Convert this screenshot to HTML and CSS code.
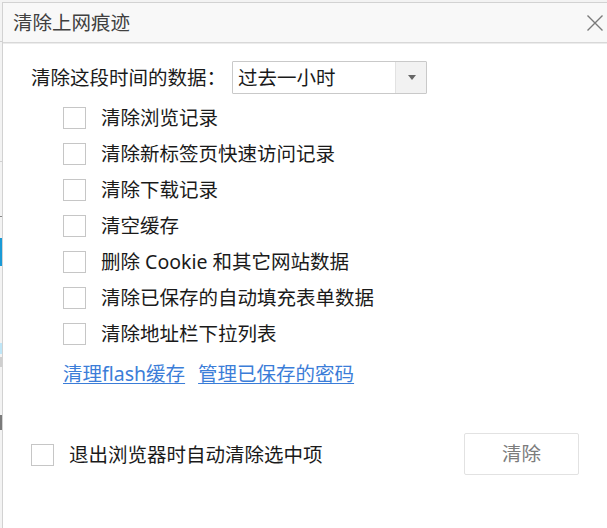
FILE: index.html
```html
<!DOCTYPE html>
<html lang="zh-CN">
<head>
<meta charset="utf-8">
<title>清除上网痕迹</title>
<link rel="stylesheet" href="styles.css">
</head>
<body>
<div class="page">
  <div class="backdrop">
    <span class="mark m1"></span>
    <span class="mark m2"></span>
    <span class="mark m3"></span>
    <span class="mark m4"></span>
    <span class="mark m5"></span>
    <span class="mark m6"></span>
    <span class="mark m7"></span>
  </div>
  <div class="dialog">
    <div class="titlebar">
      <span class="title">清除上网痕迹</span>
      <svg class="close" width="16" height="16" viewBox="0 0 16 16" aria-hidden="true">
        <path d="M0.5 0.5 L15.5 15.5 M15.5 0.5 L0.5 15.5" stroke="#7a7a7a" stroke-width="1.4" fill="none"/>
      </svg>
    </div>
    <div class="content">
      <div class="range">
        <span class="range-label">清除这段时间的数据：</span>
        <div class="select">
          <span class="select-value">过去一小时</span>
          <span class="select-btn"><span class="arrow"></span></span>
        </div>
      </div>
      <ul class="options">
        <li class="option"><span class="box"></span><span>清除浏览记录</span></li>
        <li class="option"><span class="box"></span><span>清除新标签页快速访问记录</span></li>
        <li class="option"><span class="box"></span><span>清除下载记录</span></li>
        <li class="option"><span class="box"></span><span>清空缓存</span></li>
        <li class="option"><span class="box"></span><span>删除 Cookie 和其它网站数据</span></li>
        <li class="option"><span class="box"></span><span>清除已保存的自动填充表单数据</span></li>
        <li class="option"><span class="box"></span><span>清除地址栏下拉列表</span></li>
      </ul>
      <div class="links">
        <a class="link" href="#">清理flash缓存</a>
        <a class="link" href="#">管理已保存的密码</a>
      </div>
      <div class="footer">
        <label class="exit-opt"><span class="box"></span><span>退出浏览器时自动清除选中项</span></label>
        <button class="clear-btn" type="button">清除</button>
      </div>
    </div>
  </div>
</div>
</body>
</html>
```

FILE: styles.css
```css
* { box-sizing: border-box; }

html, body {
  margin: 0;
  padding: 0;
  background: #ffffff;
}

body {
  font-family: "Noto Sans", "Noto Sans CJK SC", sans-serif;
  color: #1e1e1e;
  width: 607px;
  height: 528px;
  overflow: hidden;
}

.page {
  position: relative;
  width: 607px;
  height: 528px;
  padding: 2px 0 0 2px;
  background: #f3f3f3;
}

.backdrop {
  position: absolute;
  left: 0;
  top: 0;
  width: 2px;
  height: 528px;
}

.mark { position: absolute; left: 0; width: 2px; }
.m1 { top: 41px; height: 1px; background: #d0d0d0; }
.m2 { top: 161px; height: 1px; background: #d0d0d0; }
.m3 { top: 216px; height: 1px; background: #888; }
.m4 { top: 238px; height: 28px; background: #1a9ad6; }
.m5 { top: 343px; height: 11px; background: #bfe6f7; }
.m6 { top: 357px; height: 10px; background: #cfcfcf; }
.m7 { top: 415px; height: 15px; background: #7a7a7a; }

.dialog {
  position: relative;
  height: 526px;
  background: #ffffff;
  border-top: 1px solid #d2d2d2;
  border-left: 1px solid #d2d2d2;
  display: flex;
  flex-direction: column;
}

.titlebar {
  height: 40px;
  flex: none;
  background: #f8f8f8;
  border-bottom: 1px solid #d8d8d8;
  box-shadow: 0 1px 0 #ececec;
  display: flex;
  align-items: center;
  justify-content: space-between;
  padding: 0 4px 0 10px;
}

.title {
  font-size: 19.5px;
  line-height: 24px;
  color: #404040;
  font-weight: 400;
}

.close { display: block; margin-top: 1px; }

.content {
  display: flex;
  flex-direction: column;
}

.range {
  margin-top: 18px;
  height: 33px;
  display: flex;
  align-items: center;
  padding-left: 28px;
}

.range-label {
  font-size: 19.5px;
  line-height: 24px;
  width: 201px;
  color: #1a1a1a;
}

.select {
  width: 195px;
  height: 33px;
  border: 1px solid #c9c9c9;
  border-radius: 1px;
  display: flex;
  align-items: stretch;
  background: #fff;
}

.select-value {
  flex: 1;
  padding-left: 5px;
  font-size: 19.5px;
  line-height: 31px;
  color: #1a1a1a;
}

.select-btn {
  width: 31px;
  background: #f2f2f2;
  border-left: 1px solid #e2e2e2;
  display: flex;
  align-items: center;
  justify-content: center;
}

.arrow {
  width: 0;
  height: 0;
  border-left: 4px solid transparent;
  border-right: 4px solid transparent;
  border-top: 5px solid #666;
  margin-left: 1px;
}

.options {
  list-style: none;
  margin: 6px 0 0 0;
  padding: 0 0 0 60px;
}

.option {
  height: 36px;
  display: flex;
  align-items: center;
  gap: 15px;
  font-size: 19.5px;
  line-height: 24px;
  color: #1a1a1a;
}

.box {
  width: 23px;
  height: 22px;
  flex: none;
  border: 1px solid #c6c6c6;
  background: #fff;
}

.links {
  margin-top: 4px;
  height: 36px;
  display: flex;
  align-items: center;
  gap: 13px;
  padding-left: 60px;
}

.link {
  font-size: 19.5px;
  line-height: 24px;
  color: #3b7dd8;
  text-decoration: underline;
  text-underline-offset: 2px;
  text-decoration-thickness: 1px;
}

.footer {
  margin-top: 41px;
  height: 42px;
  display: flex;
  align-items: center;
  justify-content: space-between;
  padding: 0 28px 0 28px;
}

.exit-opt {
  display: flex;
  align-items: center;
  gap: 15px;
  font-size: 19.5px;
  line-height: 24px;
  color: #1a1a1a;
  margin-top: 2px;
}

.clear-btn {
  width: 115px;
  height: 42px;
  border: 1px solid #e2e2e2;
  border-radius: 2px;
  background: #ffffff;
  color: #7c7c7c;
  font-family: "Noto Sans", "Noto Sans CJK SC", sans-serif;
  font-size: 19.5px;
  line-height: 24px;
  padding: 0;
}
```
